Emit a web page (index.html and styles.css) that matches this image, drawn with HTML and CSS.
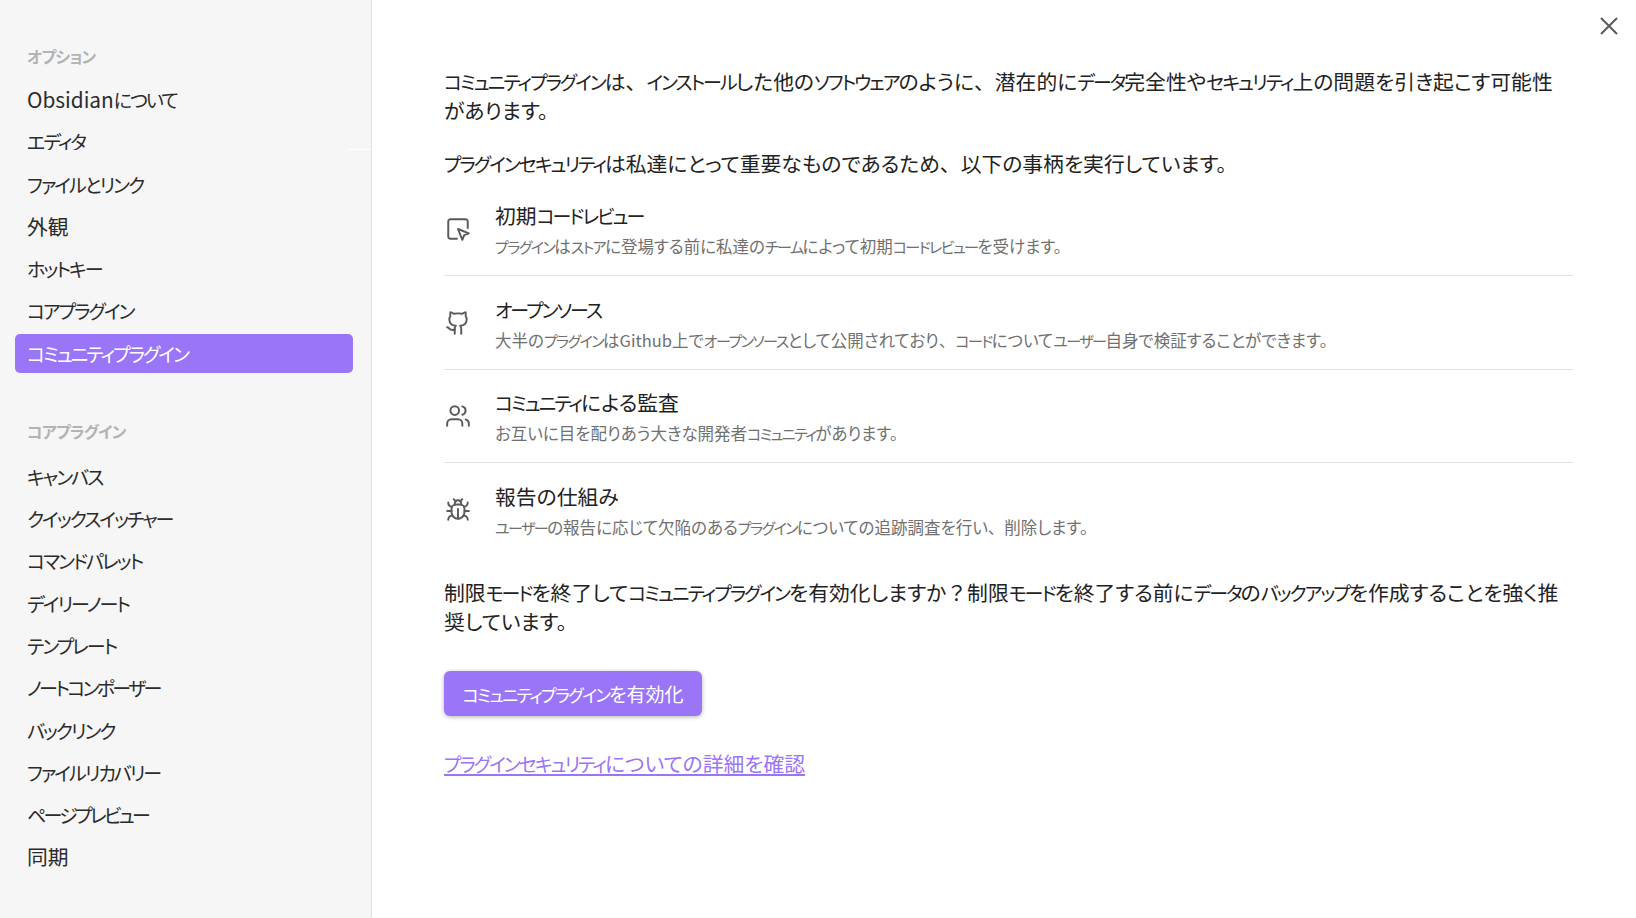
FILE: index.html
```html
<!DOCTYPE html>
<html lang="ja">
<head>
<meta charset="utf-8">
<title>コミュニティプラグイン</title>
<link rel="stylesheet" href="styles.css">
</head>
<body>
<div class="app">
  <nav class="sidebar">
    <div class="group-title">オプション</div>
    <div class="item"><span class="k">Obsidian</span>について</div>
    <div class="item">エディタ</div>
    <div class="item">ファイルとリンク</div>
    <div class="item"><span class="k">外観</span></div>
    <div class="item">ホットキー</div>
    <div class="item">コアプラグイン</div>
    <div class="item active">コミュニティプラグイン</div>
    <div class="group-title second">コアプラグイン</div>
    <div class="item">キャンバス</div>
    <div class="item">クイックスイッチャー</div>
    <div class="item">コマンドパレット</div>
    <div class="item">デイリーノート</div>
    <div class="item">テンプレート</div>
    <div class="item tight">ノートコンポーザー</div>
    <div class="item">バックリンク</div>
    <div class="item">ファイルリカバリー</div>
    <div class="item tight">ページプレビュー</div>
    <div class="item"><span class="k">同期</span></div>
    <div class="clip"></div>
    <div class="seam"></div>
  </nav>
  <main class="content">
    <svg class="close" viewBox="0 0 24 24"><path d="M4 4l16 16M20 4L4 20"/></svg>
    <p class="para first"><span class="t">コミュニティプラグイン</span>は<span class="full">、</span><span class="t">インストール</span>した他の<span class="t">ソフトウェア</span>のように<span class="full">、</span>潜在的に<span class="t">データ</span>完全性や<span class="t">セキュリティ</span>上の問題を引き起こす可能性があります。</p>
    <p class="para lead"><span class="t">プラグインセキュリティ</span>は私達にとって重要なものであるため<span class="full">、</span>以下の事柄を実行しています。</p>
    <div class="feature">
      <svg class="ficon" viewBox="0 0 24 24"><path d="M21 11V5a2 2 0 0 0-2-2H5a2 2 0 0 0-2 2v14a2 2 0 0 0 2 2h6"/><path d="m12 12 4 10 1.7-4.3L22 16z"/></svg>
      <div class="ftext"><div class="fname">初期<span class="t">コードレビュー</span></div><div class="fdesc"><span class="t">プラグイン</span>は<span class="t">ストア</span>に登場する前に私達の<span class="t">チーム</span>によって初期<span class="t">コードレビュー</span>を受けます。</div></div>
    </div>
    <div class="feature">
      <svg class="ficon" viewBox="0 0 24 24"><path d="M15 22v-4a4.8 4.8 0 0 0-1-3.5c3 0 6-2 6-5.5.08-1.25-.27-2.48-1-3.5.28-1.15.28-2.35 0-3.5 0 0-1 0-3 1.5-2.64-.5-5.36-.5-8 0C6 2 5 2 5 2c-.3 1.15-.3 2.35 0 3.5A5.4 5.4 0 0 0 4 9c0 3.5 3 5.5 6 5.5-.39.49-.68 1.05-.85 1.65S8.93 17.38 9 18v4"/><path d="M9 18c-4.51 2-5-2-7-2"/></svg>
      <div class="ftext"><div class="fname"><span class="t">オープンソース</span></div><div class="fdesc">大半の<span class="t">プラグイン</span>はGithub上で<span class="t">オープンソース</span>として公開されており<span class="full">、</span><span class="t">コード</span>について<span class="t">ユーザー</span>自身で検証することができます。</div></div>
    </div>
    <div class="feature">
      <svg class="ficon" viewBox="0 0 24 24"><path d="M16 21v-2a4 4 0 0 0-4-4H6a4 4 0 0 0-4 4v2"/><circle cx="9" cy="7" r="4"/><path d="M22 21v-2a4 4 0 0 0-3-3.87"/><path d="M16 3.13a4 4 0 0 1 0 7.75"/></svg>
      <div class="ftext"><div class="fname"><span class="t">コミュニティ</span>による監査</div><div class="fdesc">お互いに目を配りあう大きな開発者<span class="t">コミュニティ</span>があります。</div></div>
    </div>
    <div class="feature last">
      <svg class="ficon" viewBox="0 0 24 24"><path d="m8 2 1.88 1.88"/><path d="M14.12 3.88 16 2"/><path d="M9 7.13v-1a3.003 3.003 0 1 1 6 0v1"/><path d="M12 20c-3.3 0-6-2.7-6-6v-3a4 4 0 0 1 4-4h4a4 4 0 0 1 4 4v3c0 3.3-2.7 6-6 6"/><path d="M12 20v-9"/><path d="M6.53 9C4.6 8.8 3 7.1 3 5"/><path d="M6 13H2"/><path d="M3 21c0-2.1 1.7-3.9 3.8-4"/><path d="M20.97 5c0 2.1-1.6 3.8-3.5 4"/><path d="M22 13h-4"/><path d="M17.2 17c2.1.1 3.8 1.9 3.8 4"/></svg>
      <div class="ftext"><div class="fname">報告の仕組み</div><div class="fdesc"><span class="t">ユーザー</span>の報告に応じて欠陥のある<span class="t">プラグイン</span>についての追跡調査を行い<span class="full">、</span>削除します。</div></div>
    </div>
    <p class="para ask">制限<span class="t">モード</span>を終了して<span class="t">コミュニティプラグイン</span>を有効化しますか<span class="full">？</span>制限<span class="t">モード</span>を終了する前に<span class="t">データ</span>の<span class="t">バックアップ</span>を作成することを強く推奨しています。</p>
    <button class="cta"><span class="t">コミュニティプラグイン</span>を有効化</button>
    <a class="more" href="#"><span class="t">プラグインセキュリティ</span>についての詳細を確認</a>
  </main>
</div>
</body>
</html>
```
FILE: styles.css
```css
* { box-sizing: border-box; }
html, body { margin: 0; height: 100%; }
body {
  font-family: "Noto Sans CJK JP", "Noto Sans", sans-serif;
  font-feature-settings: "palt";
  font-weight: 400;
  color: #222;
  background: #fff;
  overflow: hidden;
}
.k { font-size: 1.095em; letter-spacing: 0; }
.t { font-size: .913em; letter-spacing: -.105em; line-height: 1; }
.full { font-feature-settings: normal; }
.app { display: flex; width: 1636px; height: 918px; }
.sidebar {
  position: relative;
  width: 372px;
  flex: none;
  background: #f6f6f6;
  border-right: 1px solid #e0e0e0;
  padding: 41px 18px 0 15px;
}
.clip { position: absolute; left: 0; top: 150px; width: 348px; height: 4px; background: #f6f6f6; }
.seam { position: absolute; left: 348px; top: 149px; width: 23px; height: 1px; background: #fff; }
.group-title {
  font-size: 16px;
  font-weight: 700;
  color: #b3b3b3;
  line-height: 30px;
  padding-left: 12px;
  margin-bottom: 9px;
  letter-spacing: -.8px;
}
.group-title.second { margin-top: 43px; margin-bottom: 11px; }
.item {
  font-size: 19px;
  letter-spacing: -2px;
  line-height: 39px;
  height: 39px;
  margin-bottom: 3.3px;
  padding-left: 12px;
  border-radius: 5px;
  color: #2b2b2b;
  white-space: nowrap;
}
.item.tight { letter-spacing: -2.7px; }
.item.active { background: #9a75f7; color: #fff; }
.content { position: relative; flex: 1; padding: 67px 63px 0 72px; }
.close {
  position: absolute;
  top: 13.5px;
  right: 15px;
  width: 24px;
  height: 24px;
  fill: none;
  stroke: #5a5a5a;
  stroke-width: 2;
}
.para { margin: 0; font-size: 20.8px; line-height: 29.2px; color: #222; }
.lead { margin-top: 23.8px; margin-bottom: 4.4px; }
.feature {
  display: flex;
  align-items: center;
  height: 93.5px;
  border-bottom: 1px solid #e3e3e3;
}
.feature.last { border-bottom: 0; }
.ficon {
  width: 26px;
  height: 26px;
  flex: none;
  margin-left: 1px;
  margin-right: 24px;
  fill: none;
  stroke: #5a5a5a;
  stroke-width: 1.8;
  stroke-linecap: round;
  stroke-linejoin: round;
}
.ftext { align-self: flex-start; margin-top: 16.3px; }
.fname { font-size: 20.8px; line-height: 32px; color: #222; }
.fdesc { font-size: 16.5px; line-height: 26px; margin-top: 2.3px; color: #707070; }
.ask { margin-top: 21.2px; }
.cta {
  display: block;
  margin-top: 34.6px;
  width: 258px;
  height: 44.6px;
  padding: 0;
  background: #9a75f7;
  color: #fff;
  border: 0;
  border-radius: 6px;
  font: inherit;
  font-size: 19px;
  white-space: nowrap;
  box-shadow: 0 1px 4px rgba(0,0,0,.3);
}
.more {
  display: inline-block;
  margin-top: 33.8px;
  font-size: 20.8px;
  line-height: 29.2px;
  color: #9a75f7;
  text-decoration: underline;
}
```
